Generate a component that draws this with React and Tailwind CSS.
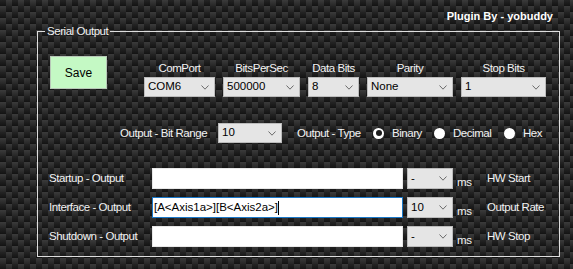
import React from 'react';

const Chevron = () => (
  <svg width="8" height="5" viewBox="0 0 8 5" className="shrink-0">
    <path d="M0.5 0.5L4 4.2L7.5 0.5" fill="none" stroke="#6a6a6a" strokeWidth="1" />
  </svg>
);

function Combo({ value, className = '' }) {
  return (
    <div
      className={`flex items-center justify-between bg-[#e5e5e5] border border-[#bcbcbc] pl-[3px] pr-[5px] text-[11.5px] text-black ${className}`}
    >
      <span>{value}</span>
      <Chevron />
    </div>
  );
}

function Radio({ checked }) {
  return (
    <span className="w-[11px] h-[11px] rounded-full bg-white flex items-center justify-center shrink-0">
      {checked && <span className="w-[6px] h-[6px] rounded-full bg-[#1c1c1c]" />}
    </span>
  );
}

const label = 'text-[11.5px] leading-[13px] tracking-[-0.45px] text-[#f2f2f2] whitespace-nowrap';

const columns = [
  { title: 'ComPort', value: 'COM6', w: 'w-[71px]' },
  { title: 'BitsPerSec', value: '500000', w: 'w-[77px]' },
  { title: 'Data Bits', value: '8', w: 'w-[51px]' },
  { title: 'Parity', value: 'None', w: 'w-[86px]' },
  { title: 'Stop Bits', value: '1', w: 'w-[85px]' },
];

const outputs = [
  { name: 'Startup - Output', text: '', rate: '-', desc: 'HW Start' },
  { name: 'Interface - Output', text: '[A<Axis1a>][B<Axis2a>]', rate: '10', desc: 'Output Rate', focus: true },
  { name: 'Shutdown - Output', text: '', rate: '-', desc: 'HW Stop' },
];

export default function App() {
  return (
    <div className="w-[573px] h-[269px] overflow-hidden font-['Liberation_Sans',Arial,sans-serif] bg-[#1e1e1e] bg-[image:linear-gradient(rgba(255,255,255,0.06),rgba(0,0,0,0.18)),conic-gradient(#2f2f2f_25%,#171717_0_50%,#2f2f2f_0_75%,#171717_0)] bg-size-[6px_6px,12px_12px]">
      {/* Header */}
      <div className="pt-[10px] pr-[20px] h-[23px] text-right text-[11px] leading-[13px] font-bold text-white">
        Plugin By - yobuddy
      </div>

      {/* Group box */}
      <div className="mt-[2px] ml-[37px] w-[523px]">
        <div className="flex h-[13px]">
          <div className="self-end w-[8px] h-[7px] border-l border-t border-[#dedede]" />
          <span className={`${label} px-[2px]`}>Serial Output</span>
          <div className="self-end flex-1 h-[7px] border-r border-t border-[#dedede]" />
        </div>

        <div className="h-[219px] border-x border-b border-[#dedede] flex flex-col">
          {/* Port settings */}
          <div className="flex items-start mt-[18px]">
            <button className="ml-[12px] w-[57px] h-[33px] bg-[#c4f9c4] border border-[#b8c8b8] text-[12px] text-black">
              Save
            </button>
            <div className="flex gap-[8px] ml-[37px]">
              {columns.map((c) => (
                <div key={c.title} className={`flex flex-col items-center ${c.w}`}>
                  <span className={`${label} mt-[6px]`}>{c.title}</span>
                  <Combo value={c.value} className={`mt-[2px] h-[20px] ${c.w}`} />
                </div>
              ))}
            </div>
          </div>

          {/* Bit range / type */}
          <div className="flex items-center mt-[26px] h-[20px] pl-[82px]">
            <span className={`${label} w-[98px]`}>Output - Bit Range</span>
            <Combo value="10" className="w-[64px] h-[20px]" />
            <span className={`${label} ml-[15px] w-[76px]`}>Output - Type</span>
            <Radio checked />
            <span className={`${label} ml-[8px] w-[42px]`}>Binary</span>
            <Radio />
            <span className={`${label} ml-[8px] w-[51px]`}>Decimal</span>
            <Radio />
            <span className={`${label} ml-[8px]`}>Hex</span>
          </div>

          {/* Outputs */}
          <div className="flex flex-col gap-[8px] mt-[25px]">
            {outputs.map((o) => (
              <div key={o.name} className="flex items-center h-[21px] pl-[11px]">
                <span className={`${label} w-[103px]`}>{o.name}</span>
                <div
                  className={`w-[251px] h-[21px] bg-white border flex items-center pl-[1px] text-[11.5px] text-black ${
                    o.focus ? 'border-[#1a78c8]' : 'border-[#e8e8e8]'
                  }`}
                >
                  <span>{o.text}</span>
                  {o.focus && <span className="w-px h-[14px] bg-black" />}
                </div>
                <Combo value={o.rate} className="ml-[4px] w-[46px] h-[21px]" />
                <span className={`${label} ml-[4px] w-[30px] self-end`}>ms</span>
                <span className={label}>{o.desc}</span>
              </div>
            ))}
          </div>
        </div>
      </div>
    </div>
  );
}
